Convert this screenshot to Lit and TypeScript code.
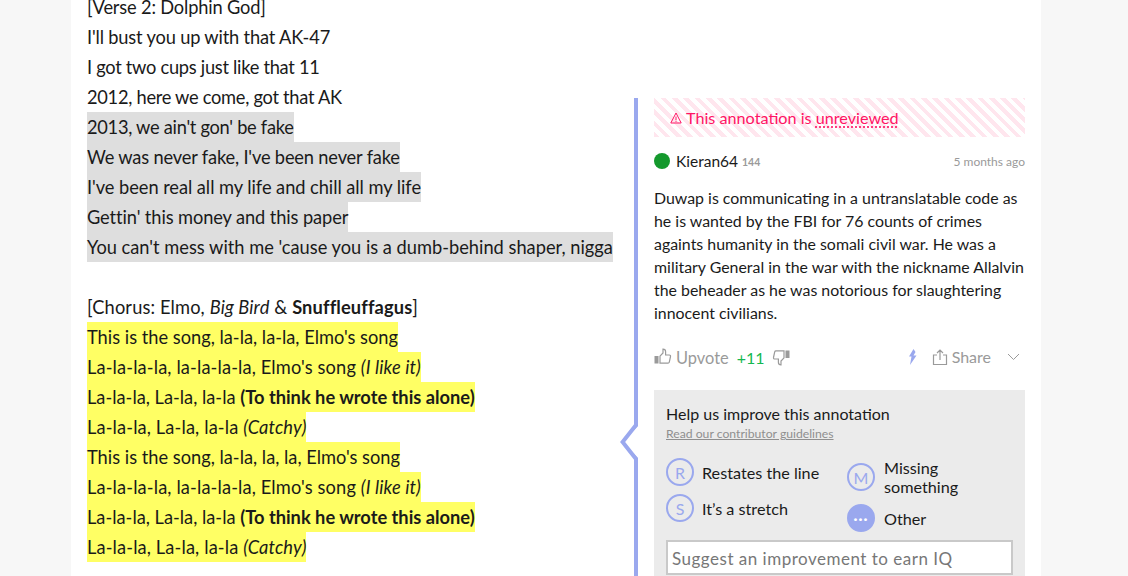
import { LitElement, html, css } from "lit";
import { customElement } from "lit/decorators.js";

@customElement("app-root")
export class AppRoot extends LitElement {
  static styles = css`
    :host { display: block; height: 576px; overflow: hidden; background: #f7f7f7; font-family: Lato, sans-serif; color: #1a1a1a; }
    .page { width: 970px; height: 576px; margin-left: 71px; background: #fff; display: grid; grid-template-columns: 563px 391px; overflow: hidden; }
    .lyrics { margin-top: -8px; padding-left: 16px; font-size: 18.25px; line-height: 30px; }
    .line { display: block; width: fit-content; height: 30px; white-space: nowrap; }
    .s0 { letter-spacing: -0.05px; }
    .s1 { letter-spacing: -0.1px; }
    .s2 { letter-spacing: -0.17px; }
    .s3 { letter-spacing: -0.28px; }
    .w1 { letter-spacing: 0.13px; }
    .grey { background: #dedede; }
    .yellow { background: #ffff64; }
    .blank { height: 30px; }
    .anno { position: relative; margin-top: 98px; border-left: 4px solid #9aa8ee; padding-left: 16px; height: 600px; box-sizing: border-box; }
    .arrow { position: absolute; left: -18px; top: 326px; }
    .banner { height: 39px; display: flex; align-items: center; gap: 4px; padding-left: 16px; color: #ff1464; font-size: 16.2px;
      background: repeating-linear-gradient(45deg, #ffe6ee 0 4px, #fff 4px 8px); }
    .banner u { text-decoration: underline dotted; text-underline-offset: 3px; }
    .author { display: flex; align-items: center; margin-top: 14px; height: 20px; font-size: 15.5px; }
    .dot { width: 16px; height: 16px; border-radius: 50%; background: #14992d; margin-right: 6px; }
    .iq { font-size: 10.5px; color: #9a9a9a; font-weight: 700; margin-left: 4px; margin-top: 2px; }
    .time { margin-left: auto; font-size: 12px; color: #9a9a9a; }
    .body { margin: 15px 0 0; font-size: 15.9px; line-height: 23px; white-space: nowrap; }
    .votes { display: flex; align-items: center; margin-top: 21px; height: 24px; color: #9a9a9a; font-size: 16.4px; padding-right: 5px; }
    .up { margin-left: 4px; }
    .plus { color: #14b850; margin: 0 7px 0 8px; font-size: 16px; }
    .right { margin-left: auto; display: flex; align-items: center; font-size: 16px; }
    .share-icon { margin-left: 14px; }
    .share { margin: 0 0 2px 4px; }
    .chev { margin-left: 16px; }
    .down { transform: rotate(180deg); }
    .help { margin-top: 21px; padding: 14px 12px; background: #ebebeb; height: 200px; }
    .help h4 { margin: 0; font-size: 16px; font-weight: 400; line-height: 20px; }
    .guide { font-size: 12.2px; color: #8f8f8f; text-decoration: underline; line-height: 20px; display: block; }
    .opts { display: grid; grid-template-columns: 181px 1fr; margin-top: 14px; }
    .col { display: flex; flex-direction: column; gap: 8px; }
    .opt { display: flex; align-items: center; gap: 8px; font-size: 16.2px; line-height: 19px; }
    .col.b .opt { gap: 9px; }
    .c { flex: none; width: 24px; height: 24px; border: 2px solid #9aa8ee; border-radius: 50%; color: #9aa8ee; display: flex; align-items: center; justify-content: center; font-size: 16px; }
    .c.fill { background: #9aa8ee; color: #fff; font-weight: 900; font-size: 14px; letter-spacing: 1px; }
    .input { margin-top: 8px; height: 35px; box-sizing: border-box; border: 2px solid #c9c9c9; background: #fff; color: #777; font-size: 17px; letter-spacing: 0.5px; display: flex; align-items: center; padding: 1px 0 0 4px; }
  `;

  private thumb(down = false) {
    return html`<svg class=${down ? "down" : ""} width="18" height="18" viewBox="0 0 18 18" fill="none" stroke="#9a9a9a" stroke-width="1.2"><rect x="0.5" y="8" width="4" height="7.5" fill="#9a9a9a" stroke="none"/><path d="M6 8.2 9 5V1.2c1.6 0 2.6 1 2.6 2.6V7h3.7c.8 0 1.4.7 1.2 1.5l-1.2 5.6c-.2.7-.7 1-1.3 1H6z"/></svg>`;
  }

  render() {
    return html`<div class="page">
      <div class="lyrics">
        <span class="line s2">[Verse 2: Dolphin God]</span>
        <span class="line s2">I'll bust you up with that AK-47</span>
        <span class="line s3">I got two cups just like that 11</span>
        <span class="line s3">2012, here we come, got that AK</span>
        <span class="line grey s3">2013, we ain't gon' be fake</span>
        <span class="line grey s2">We was never fake, I've been never fake</span>
        <span class="line grey s0">I've been real all my life and chill all my life</span>
        <span class="line grey s1">Gettin' this money and this paper</span>
        <span class="line grey">You can't mess with me 'cause you is a dumb-behind shaper, nigga</span>
        <div class="blank"></div>
        <span class="line w1">[Chorus: Elmo, <i>Big Bird</i> &amp; <b>Snuffleuffagus</b>]</span>
        <span class="line yellow">This is the song, la-la, la-la, Elmo's song</span>
        <span class="line yellow w1">La-la-la-la, la-la-la-la, Elmo's song <i>(I like it)</i></span>
        <span class="line yellow">La-la-la, La-la, la-la <b>(To think he wrote this alone)</b></span>
        <span class="line yellow w1">La-la-la, La-la, la-la <i>(Catchy)</i></span>
        <span class="line yellow">This is the song, la-la, la, la, Elmo's song</span>
        <span class="line yellow w1">La-la-la-la, la-la-la-la, Elmo's song <i>(I like it)</i></span>
        <span class="line yellow">La-la-la, La-la, la-la <b>(To think he wrote this alone)</b></span>
        <span class="line yellow w1">La-la-la, La-la, la-la <i>(Catchy)</i></span>
      </div>
      <div class="anno">
        <svg class="arrow" width="18" height="38" viewBox="0 0 18 38"><path d="M18 0v2L3 18l15 16v4" fill="#fff" stroke="none"/><path d="M16 1 2.6 18l13.4 17" fill="none" stroke="#9aa8ee" stroke-width="4"/></svg>
        <div class="banner">
          <svg width="12" height="12" viewBox="0 0 12 12" fill="none" stroke="#ff1464"><path d="M6 1 .8 11h10.4zM6 4.5V8M6 8.8v1"/></svg>
          <span>This annotation is <u>unreviewed</u></span>
        </div>
        <div class="author"><span class="dot"></span>Kieran64<span class="iq">144</span><span class="time">5 months ago</span></div>
        <p class="body">Duwap is communicating in a untranslatable code as<br>he is wanted by the FBI for 76 counts of crimes<br>againts humanity in the somali civil war. He was a<br>military General in the war with the nickname Allalvin<br>the beheader as he was notorious for slaughtering<br>innocent civilians.</p>
        <div class="votes">
          ${this.thumb()}<span class="up">Upvote</span><span class="plus">+11</span>${this.thumb(true)}
          <div class="right">
            <svg width="10" height="16" viewBox="0 0 10 16" fill="#9aa8ee"><path d="M5.5 0 1 7.5h2.5L2 16l6.5-9.5H5.5l2-3.5z"/></svg>
            <svg class="share-icon" width="16" height="18" viewBox="0 0 16 18" fill="none" stroke="#9a9a9a" stroke-width="1.2"><path d="M5 7H1.5v9.5h13V7H11M8 12V2M5 5l3-3 3 3"/></svg>
            <span class="share">Share</span>
            <svg class="chev" width="13" height="8" viewBox="0 0 13 8" fill="none" stroke="#9a9a9a"><path d="M1 1l5.5 5.5L12 1"/></svg>
          </div>
        </div>
        <div class="help">
          <h4>Help us improve this annotation</h4>
          <a class="guide">Read our contributor guidelines</a>
          <div class="opts">
            <div class="col">
              <div class="opt"><span class="c">R</span>Restates the line</div>
              <div class="opt"><span class="c">S</span>It’s a stretch</div>
            </div>
            <div class="col b">
              <div class="opt"><span class="c">M</span>Missing<br>something</div>
              <div class="opt"><span class="c fill">···</span>Other</div>
            </div>
          </div>
          <div class="input">Suggest an improvement to earn IQ</div>
        </div>
      </div>
    </div>`;
  }
}
